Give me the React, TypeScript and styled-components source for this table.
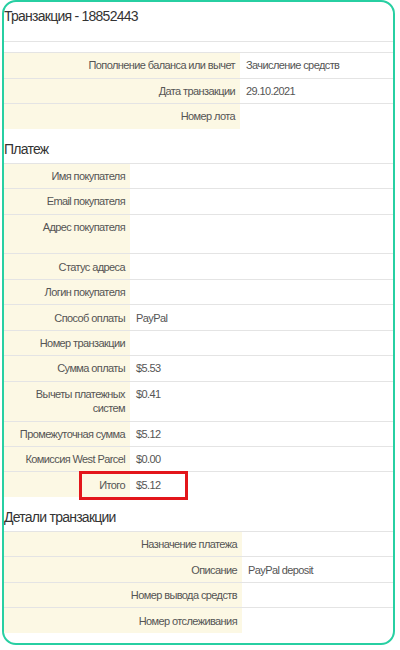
import React from "react";
import styled, { createGlobalStyle } from "styled-components";

const Global = createGlobalStyle`
  html, body { margin: 0; padding: 0; background: #fff; }
  body { font-family: "Liberation Sans", Arial, sans-serif; }
`;

const Frame = styled.div`
  box-sizing: border-box;
  margin-left: 2px;
  width: 393px;
  height: 645px;
  border: 2px solid #27cfa2;
  border-radius: 14px;
  overflow: hidden;
  background: #fff;
`;

const Title = styled.div`
  font-size: 14px;
  line-height: 20px;
  letter-spacing: -0.75px;
  color: #333;
  padding: 4px 0 15px 0;
`;

const Heading = styled.div`
  font-size: 14px;
  line-height: 20px;
  letter-spacing: -0.75px;
  color: #333;
  padding: 10px 0 4px 0;
`;

const Row = styled.div<{ $label: number }>`
  position: relative;
  display: grid;
  grid-template-columns: ${(p) => p.$label}px 1fr;
  border-top: 1px solid #e4e4e4;
  font-size: 11px;
  line-height: 14.2px;
  letter-spacing: -0.6px;
`;

const Spacer = styled.div`
  border-top: 1px solid #e4e4e4;
  height: 10.3px;
`;

const Label = styled.div`
  background: #fcf8e4;
  color: #555;
  text-align: right;
  padding: 5.15px 5px;
`;

const Value = styled.div<{ $lines?: number }>`
  color: #555;
  padding: 5.15px 6px;
  min-height: ${(p) => (p.$lines ?? 1) * 14.2}px;
`;

const Highlight = styled.div`
  position: absolute;
  box-sizing: border-box;
  left: 75px;
  top: -1px;
  width: 109px;
  height: 29px;
  border: 3px solid #e3161b;
  pointer-events: none;
`;

type Item = { l: string; v?: string; lines?: number; hl?: boolean };

const top: Item[] = [
  { l: "Пополнение баланса или вычет", v: "Зачисление средств" },
  { l: "Дата транзакции", v: "29.10.2021" },
  { l: "Номер лота" },
];

const payment: Item[] = [
  { l: "Имя покупателя" },
  { l: "Email покупателя" },
  { l: "Адрес покупателя", lines: 2 },
  { l: "Статус адреса" },
  { l: "Логин покупателя" },
  { l: "Способ оплаты", v: "PayPal" },
  { l: "Номер транзакции" },
  { l: "Сумма оплаты", v: "$5.53" },
  { l: "Вычеты платежных систем", v: "$0.41" },
  { l: "Промежуточная сумма", v: "$5.12" },
  { l: "Комиссия West Parcel", v: "$0.00" },
  { l: "Итого", v: "$5.12", hl: true },
];

const details: Item[] = [
  { l: "Назначение платежа" },
  { l: "Описание", v: "PayPal deposit" },
  { l: "Номер вывода средств" },
  { l: "Номер отслеживания" },
];

const Rows = ({ items, w }: { items: Item[]; w: number }) => (
  <>
    {items.map((it) => (
      <Row key={it.l} $label={w}>
        <Label>{it.l}</Label>
        <Value $lines={it.lines}>{it.v ?? ""}</Value>
        {it.hl && <Highlight />}
      </Row>
    ))}
  </>
);

export default function App() {
  return (
    <>
      <Global />
      <Frame>
        <Title>Транзакция - 18852443</Title>
        <Spacer />
        <Rows items={top} w={236} />
        <Heading>Платеж</Heading>
        <Rows items={payment} w={126} />
        <Heading>Детали транзакции</Heading>
        <Rows items={details} w={238} />
      </Frame>
    </>
  );
}
